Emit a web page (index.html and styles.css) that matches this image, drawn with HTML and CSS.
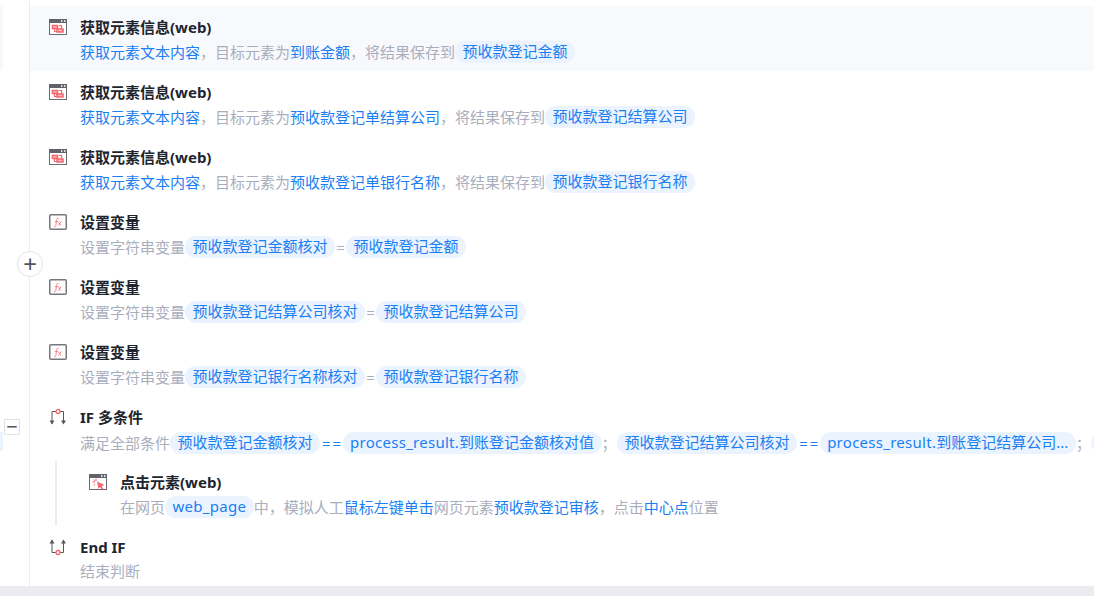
FILE: index.html
```html
<!DOCTYPE html>
<html lang="zh-CN">
<head>
<meta charset="utf-8">
<title>流程</title>
<link rel="stylesheet" href="styles.css">
</head>
<body>
<svg class="defs" width="0" height="0" aria-hidden="true">
  <symbol id="i-get" viewBox="0 0 18 16">
    <rect x="0.500" y="0.500" width="17" height="15" fill="#fff" stroke="#6b6b73"/>
    <rect x="0" y="0" width="18" height="4" fill="#62626b"/>
    <rect x="12" y="1" width="1.500" height="2" fill="#ddd"/><rect x="15" y="1" width="1.500" height="2" fill="#ddd"/>
    <path d="M3.500 6.500h5v3h-5zM8 10h6v3H8z" fill="#fbb" stroke="#f2666c" stroke-width="1.500"/>
    <path d="M5.500 9.500v3h3M10 6.500h2.500v3" fill="none" stroke="#f2666c" stroke-width="1.200"/>
  </symbol>
  <symbol id="i-fx" viewBox="0 0 18 16">
    <rect x="0.750" y="0.750" width="16.500" height="14.500" rx="1" fill="#fff" stroke="#77777f" stroke-width="1.500"/>
    <path d="M9.500 4.500c-1.500-.5-1.800.5-2 2l-.7 5c-.2 1-.8 1.500-1.800 1M5.800 7.500h3M9 7.500l3 4M12.300 7.500l-3 4" fill="none" stroke="#f2767c" stroke-width=".9"/>
  </symbol>
  <symbol id="i-if" viewBox="0 0 18 18">
    <path d="M3 16V3.500h4M11 3.500h3.500V16" fill="none" stroke="#55565e" stroke-width="1"/>
    <path d="M0.500 12.500h5L3 16.500zM12 12.500h5l-2.500 4z" fill="#55565e"/>
    <circle cx="9" cy="3.500" r="2" fill="#fff" stroke="#f2666c" stroke-width="1.300"/>
  </symbol>
  <symbol id="i-end" viewBox="0 0 18 18">
    <path d="M3 2v12.500h4M11 14.500h3.500V2" fill="none" stroke="#55565e" stroke-width="1"/>
    <path d="M0.500 5.500h5L3 1.500zM12 5.500h5l-2.500-4z" fill="#55565e"/>
    <circle cx="9" cy="14.500" r="2" fill="#fff" stroke="#f2666c" stroke-width="1.300"/>
  </symbol>
  <symbol id="i-click" viewBox="0 0 18 16">
    <rect x="0.500" y="0.500" width="17" height="15" fill="#fff" stroke="#6b6b73"/>
    <rect x="0" y="0" width="18" height="4" fill="#62626b"/>
    <rect x="12" y="1" width="1.500" height="2" fill="#ddd"/><rect x="15" y="1" width="1.500" height="2" fill="#ddd"/>
    <path d="M8 7.500l7.500 3.500-3 1.200 2 2.500-1.500 1-2-2.700-1.500 2z" fill="#f2666c"/>
    <path d="M7 4.500v2.500M3.500 8h2.500M4.500 5.500L6.200 7M4.500 11.500L6.200 10" stroke="#f2666c" fill="none"/>
  </symbol>
</svg>
<main class="page">
  <div class="strip"></div>
  <div class="strip strip-blue"></div>
  <div class="steps">
    <section class="step step-active">
      <svg class="ico"><use href="#i-get"/></svg>
      <div class="body">
        <h3 class="title">获取元素信息(web)</h3>
        <p class="desc"><a>获取元素文本内容</a>，目标元素为<a>到账金额</a>，将结果保存到<span class="chip">预收款登记金额</span></p>
      </div>
    </section>
    <section class="step">
      <svg class="ico"><use href="#i-get"/></svg>
      <div class="body">
        <h3 class="title">获取元素信息(web)</h3>
        <p class="desc"><a>获取元素文本内容</a>，目标元素为<a>预收款登记单结算公司</a>，将结果保存到<span class="chip">预收款登记结算公司</span></p>
      </div>
    </section>
    <section class="step">
      <svg class="ico"><use href="#i-get"/></svg>
      <div class="body">
        <h3 class="title">获取元素信息(web)</h3>
        <p class="desc"><a>获取元素文本内容</a>，目标元素为<a>预收款登记单银行名称</a>，将结果保存到<span class="chip">预收款登记银行名称</span></p>
      </div>
    </section>
    <section class="step">
      <svg class="ico"><use href="#i-fx"/></svg>
      <div class="body">
        <h3 class="title">设置变量</h3>
        <p class="desc">设置字符串变量<span class="chip">预收款登记金额核对</span><i class="op">=</i><span class="chip">预收款登记金额</span></p>
      </div>
    </section>
    <section class="step">
      <svg class="ico"><use href="#i-fx"/></svg>
      <div class="body">
        <h3 class="title">设置变量</h3>
        <p class="desc">设置字符串变量<span class="chip">预收款登记结算公司核对</span><i class="op">=</i><span class="chip">预收款登记结算公司</span></p>
      </div>
    </section>
    <section class="step">
      <svg class="ico"><use href="#i-fx"/></svg>
      <div class="body">
        <h3 class="title">设置变量</h3>
        <p class="desc">设置字符串变量<span class="chip">预收款登记银行名称核对</span><i class="op">=</i><span class="chip">预收款登记银行名称</span></p>
      </div>
    </section>
    <section class="step">
      <svg class="ico"><use href="#i-if"/></svg>
      <div class="body">
        <h3 class="title">IF 多条件</h3>
        <p class="desc desc-low">满足全部条件<span class="chip">预收款登记金额核对</span><a class="eq">==</a><span class="chip"><span class="lat">process_result.</span>到账登记金额核对值</span><i class="semi">；</i><span class="chip">预收款登记结算公司核对</span><a class="eq">==</a><span class="chip"><span class="lat">process_result.</span>到账登记结算公司...</span><i class="semi">；</i><span class="chip">预收款</span></p>
      </div>
    </section>
    <div class="nest">
      <section class="step step-inner">
        <svg class="ico"><use href="#i-click"/></svg>
        <div class="body">
          <h3 class="title">点击元素(web)</h3>
          <p class="desc">在网页<span class="chip"><span class="lat">web_page</span></span>中，模拟人工<a>鼠标左键单击</a>网页元素<a>预收款登记审核</a>，点击<a>中心点</a>位置</p>
        </div>
      </section>
    </div>
    <section class="step">
      <svg class="ico"><use href="#i-end"/></svg>
      <div class="body">
        <h3 class="title">End IF</h3>
        <p class="desc desc-high">结束判断</p>
      </div>
    </section>
    <button class="add" aria-label="添加">+</button>
    <button class="fold" aria-label="折叠">−</button>
  </div>
  <div class="scrollbar"></div>
</main>
</body>
</html>
```
FILE: styles.css
```css
* { box-sizing: border-box; }
html, body { margin: 0; padding: 0; background: #fff; overflow: hidden; }
body {
  width: 1094px;
  height: 599px;
  font-family: "Noto Sans", "Noto Sans CJK SC", sans-serif;
  font-size: 15px;
}
.defs { position: absolute; }
.page { position: relative; height: 599px; display: flex; flex-direction: column; }
.strip { position: absolute; left: 0; top: 6px; width: 3px; height: 64px; background: #f8f9fc; }
.strip-blue { top: 432px; height: 19px; background: #ebf3fe; }
.steps {
  position: relative;
  margin-left: 29px;
  height: 586px;
  flex: none;
  padding-top: 6px;
  border-left: 1px solid #ebecf0;
}
.step {
  display: flex;
  height: 65px;
  padding-left: 19px;
  white-space: nowrap;
  overflow: hidden;
}
.step-active { background: #f8f9fc; }
.ico { width: 18px; height: 18px; flex: none; margin-top: 12px; margin-right: 13px; }
.body { padding-top: 10px; min-width: 0; }
.title {
  margin: 0;
  font-size: 15px;
  font-weight: 700;
  line-height: 22px;
  color: #20242e;
}
.desc {
  margin: 3px 0 0;
  line-height: 22px;
  height: 22px;
  color: #a9aebd;
  display: flex;
  align-items: center;
}
.desc-low { margin-top: 4px; }
.desc-high { margin-top: 2px; }
.desc a { color: #1a7ff2; }
.chip {
  display: inline-block;
  flex: none;
  height: 22px;
  line-height: 21px;
  padding: 0 7.5px;
  border-radius: 11px;
  background: #ebf3fe;
  color: #1a7ff2;
}
.lat { letter-spacing: .27px; }
.op { font-style: normal; width: 11px; flex: none; text-align: center; }
.desc .eq { letter-spacing: 2px; width: 22.500px; flex: none; padding-left: 2px; }
.semi { font-style: normal; width: 15.500px; flex: none; }
.nest { margin-left: 25px; border-left: 2px solid #ebecf0; height: 65px; }
.nest .step { padding-left: 32px; }
.add {
  position: absolute;
  left: -13px;
  top: 251px;
  width: 26px;
  height: 26px;
  padding: 0;
  border: 1px solid #e2e3e7;
  border-radius: 50%;
  background: #fff;
  color: #4f545f;
  font: 400 24px/22px "Noto Sans", sans-serif;
}
.fold {
  position: absolute;
  left: -26px;
  top: 419px;
  width: 16px;
  height: 16px;
  padding: 0;
  border: 1px solid #e2e3e7;
  background: #fff;
  color: #55565e;
  font: 400 20px/12px "Noto Sans", sans-serif;
}
.scrollbar { height: 10px; background: #ebecf0; flex: none; }
```
